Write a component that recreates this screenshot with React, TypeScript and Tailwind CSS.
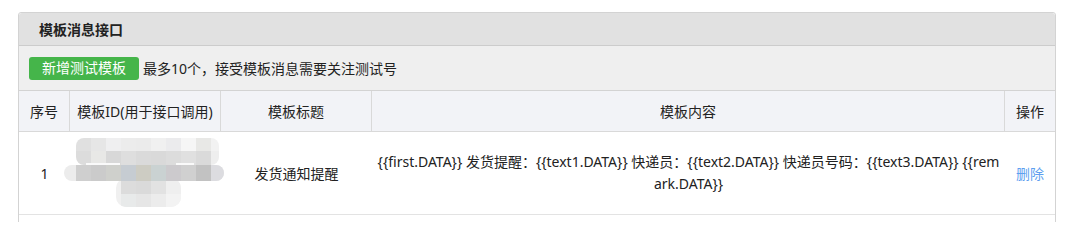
import React from "react";

const font = { fontFamily: '"Noto Sans", "Noto Sans CJK SC", sans-serif' };

function Mosaic() {
  const top1 = ["#e0e0e0", "#e6e6e6", "#efeff0", "#ececec", "#ebebeb", "#f0f0f0", "#ebebed", "#f6f6f6", "#e8e8e6", "#f2f2f2"];
  const top2 = ["#dcdcdc", "#e8e8e6", "#d8d8d8", "#dedede", "#dadada", "#d9d9d9", "#dcdcdc", "#e0e0e0", "#dadada", "#eeeeee"];
  const band = ["#cfcfcf", "#cbcbcb", "#cfd0cc", "#c6ccd2", "#cdccc3", "#cad2d2", "#cccacd", "#d0d0d0", "#c2c2c2"];
  const bot1 = ["#dcdcdc", "#dadada", "#e2e2e2", "#efefef"];
  const bot2 = ["#e8eaea", "#e6e6e6", "#ececec", "#f3f3f3"];
  return (
    <svg width="160" height="70" viewBox="0 0 160 70" className="block overflow-visible">
      <defs>
        <clipPath id="topc">
          <rect x="12" y="0" width="143" height="27" rx="8" />
        </clipPath>
        <clipPath id="bandc">
          <rect x="0" y="27" width="160" height="16" rx="8" />
        </clipPath>
        <clipPath id="botc">
          <rect x="52" y="40" width="65" height="29" rx="10" />
        </clipPath>
      </defs>
      <g clipPath="url(#topc)">
        {top1.map((c, i) => (
          <rect key={"a" + i} x={12 + i * 15} y={0} width={15} height={13} fill={c} />
        ))}
        {top2.map((c, i) => (
          <rect key={"b" + i} x={12 + i * 15} y={13} width={15} height={14} fill={c} />
        ))}
      </g>
      <g clipPath="url(#botc)">
        <rect x="52" y="40" width="65" height="29" fill="#f0f0f0" />
        {bot1.map((c, i) => (
          <rect key={"d" + i} x={57 + i * 15} y={43} width={15} height={13} fill={c} />
        ))}
        {bot2.map((c, i) => (
          <rect key={"e" + i} x={57 + i * 15} y={56} width={15} height={13} fill={c} />
        ))}
      </g>
      <g clipPath="url(#bandc)">
        <rect x="0" y="27" width="160" height="16" fill="#ececec" />
        {band.map((c, i) => (
          <rect key={"c" + i} x={12 + i * 15} y={27} width={15} height={16} fill={c} />
        ))}
        <rect x="147" y="27" width="13" height="16" fill="#dcdce0" />
      </g>
      <rect x="22" y="25" width="34" height="2" fill="#fafafa" />
      <rect x="112" y="25" width="18" height="2" fill="#fafafa" />
    </svg>
  );
}

export default function App() {
  const th = "flex items-center justify-center border-r border-[#d9d9d9] h-[40px] text-[14px] text-[#222]";
  return (
    <div className="bg-white w-[1074px] h-[222px] pt-[12px] pl-[18px] overflow-hidden" style={font}>
      <div className="w-[1038px] border border-[#d3d3d3] rounded-t-[3px] h-[240px]">
        <div className="h-[33px] bg-[#e1e1e1] border-b border-[#cccccc] flex items-center pl-[20px] text-[14px] font-bold text-[#222] rounded-t-[3px]">
          模板消息接口
        </div>
        <div className="h-[45px] bg-[#efefef] border-b border-[#d3d3d3] flex items-center pl-[10px]">
          <button className="h-[23px] w-[110px] bg-[#45b54a] rounded-[3px] text-white text-[14px] flex items-center justify-center leading-none">
            新增测试模板
          </button>
          <span className="ml-[4px] text-[14px] text-[#222]">最多10个，接受模板消息需要关注测试号</span>
        </div>
        <div className="grid grid-cols-[51px_151px_151px_633px_50px] bg-[#f2f3f7] border-b border-[#d9d9d9]">
          <div className={th}>序号</div>
          <div className={th}>模板ID(用于接口调用)</div>
          <div className={th}>模板标题</div>
          <div className={th}>模板内容</div>
          <div className={th + " border-r-0"}>操作</div>
        </div>
        <div className="grid grid-cols-[51px_151px_151px_633px_50px] border-b border-[#e3e3e3] text-[14px] text-[#222]">
          <div className="flex items-center justify-center">1</div>
          <div className="flex items-center justify-center">
            <div className="-ml-[4px] -mt-[1px]">
              <Mosaic />
            </div>
          </div>
          <div className="flex items-center justify-center">发货通知提醒</div>
          <div className="py-[19px] px-[2px] leading-[22px] text-center break-all">
            {"{{first.DATA}} 发货提醒：{{text1.DATA}} 快递员：{{text2.DATA}} 快递员号码：{{text3.DATA}} {{remark.DATA}}"}
          </div>
          <div className="flex items-center justify-center text-[#5e9ff0]">删除</div>
        </div>
      </div>
    </div>
  );
}
